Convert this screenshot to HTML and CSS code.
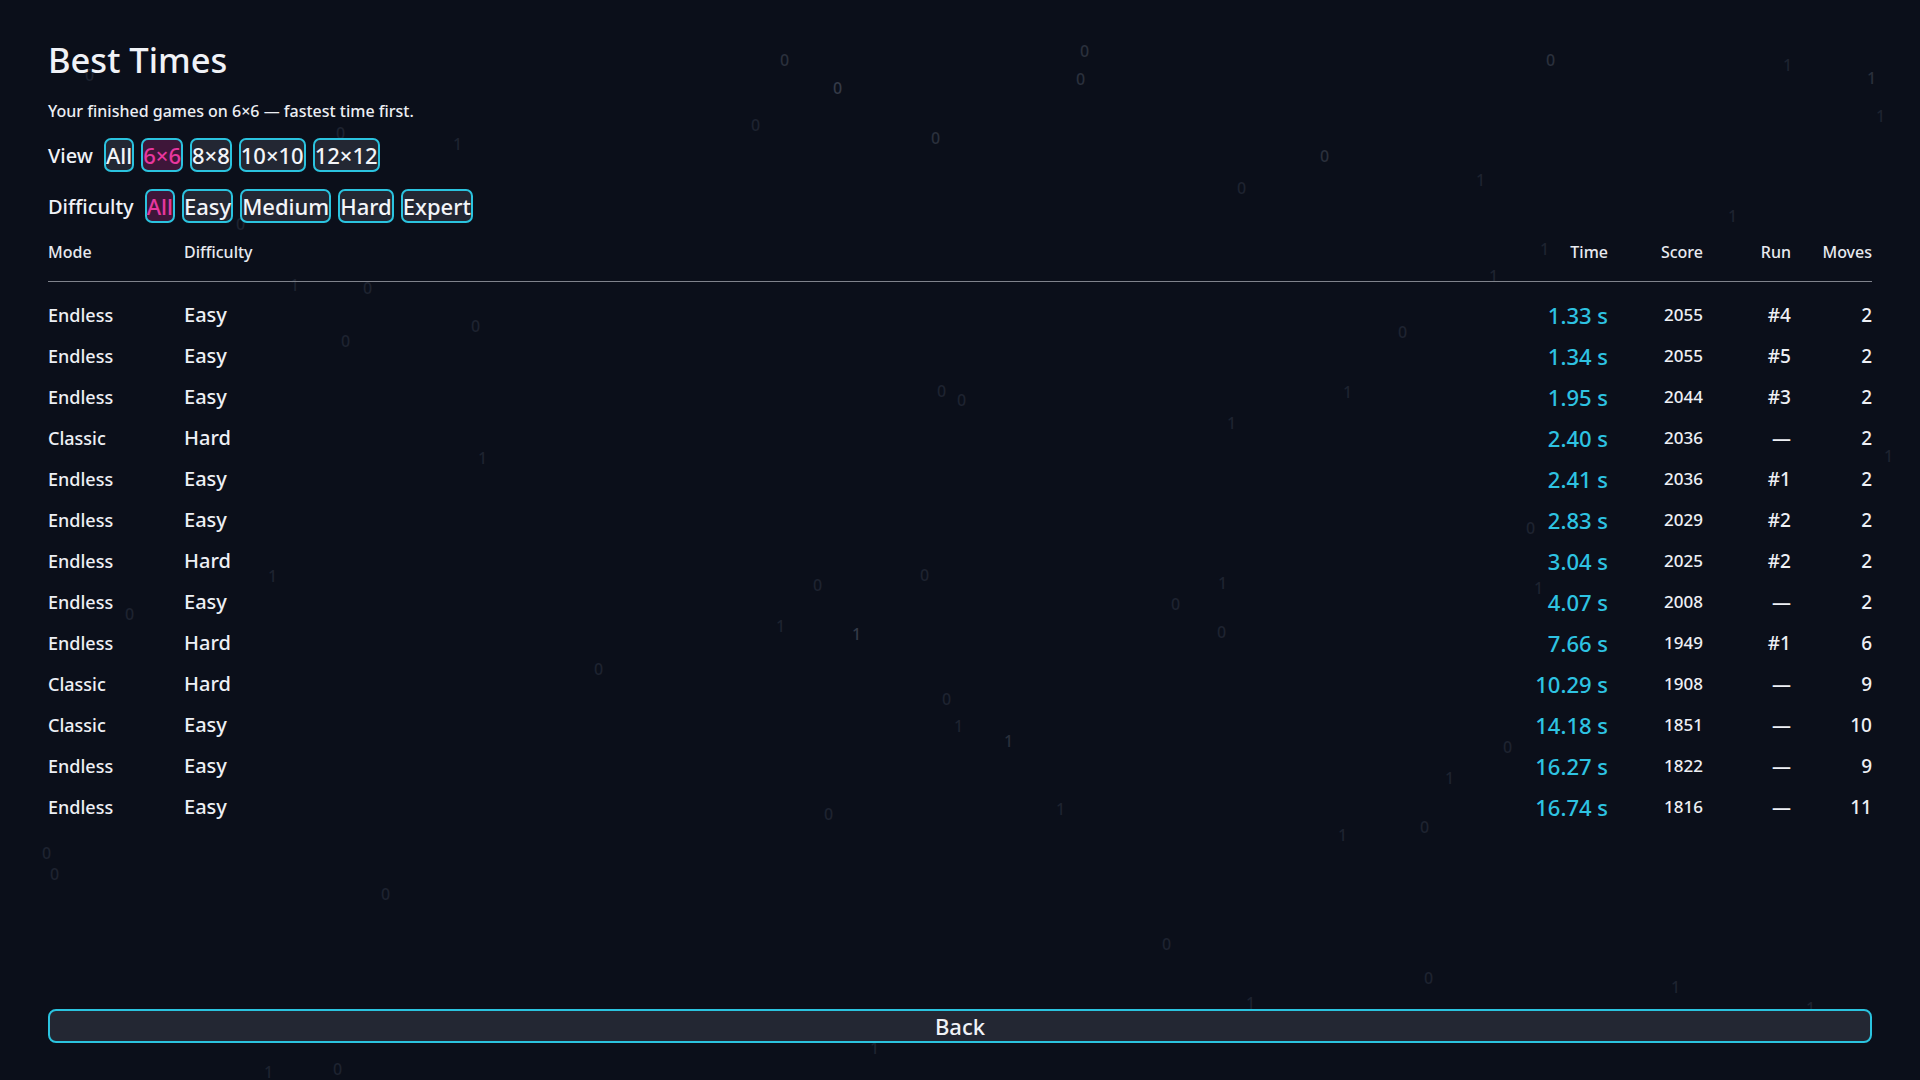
FILE: index.html
```html
<!DOCTYPE html>
<html lang="en">
<head>
<meta charset="utf-8">
<title>Best Times</title>
<link rel="stylesheet" href="styles.css">
</head>
<body>
<div class="rain" aria-hidden="true">
  <span class="d d2" style="left:780px;top:52px">0</span>
  <span class="d d3" style="left:833px;top:80px">0</span>
  <span class="d d2" style="left:1080px;top:43px">0</span>
  <span class="d d2" style="left:1076px;top:71px">0</span>
  <span class="d d2" style="left:1546px;top:52px">0</span>
  <span class="d d1" style="left:1783px;top:57px">1</span>
  <span class="d d2" style="left:1867px;top:70px">1</span>
  <span class="d d1" style="left:1876px;top:108px">1</span>
  <span class="d d1" style="left:751px;top:117px">0</span>
  <span class="d d2" style="left:931px;top:130px">0</span>
  <span class="d d2" style="left:1320px;top:148px">0</span>
  <span class="d d1" style="left:453px;top:136px">1</span>
  <span class="d d1" style="left:1237px;top:180px">0</span>
  <span class="d d1" style="left:1476px;top:172px">1</span>
  <span class="d d1" style="left:1728px;top:208px">1</span>
  <span class="d d1" style="left:85px;top:67px">0</span>
  <span class="d d1" style="left:336px;top:125px">0</span>
  <span class="d d1" style="left:236px;top:216px">0</span>
  <span class="d d1" style="left:1540px;top:241px">1</span>
  <span class="d d1" style="left:1489px;top:268px">1</span>
  <span class="d d1" style="left:290px;top:277px">1</span>
  <span class="d d1" style="left:363px;top:280px">0</span>
  <span class="d d1" style="left:471px;top:318px">0</span>
  <span class="d d1" style="left:341px;top:333px">0</span>
  <span class="d d1" style="left:1398px;top:324px">0</span>
  <span class="d d1" style="left:937px;top:383px">0</span>
  <span class="d d1" style="left:957px;top:392px">0</span>
  <span class="d d1" style="left:1343px;top:384px">1</span>
  <span class="d d1" style="left:1227px;top:415px">1</span>
  <span class="d d1" style="left:478px;top:450px">1</span>
  <span class="d d1" style="left:1884px;top:448px">1</span>
  <span class="d d1" style="left:1526px;top:520px">0</span>
  <span class="d d1" style="left:268px;top:568px">1</span>
  <span class="d d1" style="left:813px;top:577px">0</span>
  <span class="d d1" style="left:920px;top:567px">0</span>
  <span class="d d1" style="left:1218px;top:575px">1</span>
  <span class="d d1" style="left:1171px;top:596px">0</span>
  <span class="d d1" style="left:1534px;top:580px">1</span>
  <span class="d d1" style="left:125px;top:606px">0</span>
  <span class="d d1" style="left:776px;top:618px">1</span>
  <span class="d d3" style="left:852px;top:626px">1</span>
  <span class="d d1" style="left:1217px;top:624px">0</span>
  <span class="d d1" style="left:594px;top:661px">0</span>
  <span class="d d1" style="left:942px;top:691px">0</span>
  <span class="d d1" style="left:954px;top:718px">1</span>
  <span class="d d2" style="left:1004px;top:733px">1</span>
  <span class="d d1" style="left:1503px;top:739px">0</span>
  <span class="d d1" style="left:1445px;top:770px">1</span>
  <span class="d d1" style="left:824px;top:806px">0</span>
  <span class="d d1" style="left:1056px;top:801px">1</span>
  <span class="d d1" style="left:1338px;top:827px">1</span>
  <span class="d d1" style="left:1420px;top:819px">0</span>
  <span class="d d1" style="left:42px;top:845px">0</span>
  <span class="d d1" style="left:50px;top:866px">0</span>
  <span class="d d1" style="left:381px;top:886px">0</span>
  <span class="d d1" style="left:1162px;top:936px">0</span>
  <span class="d d1" style="left:1424px;top:970px">0</span>
  <span class="d d1" style="left:1671px;top:979px">1</span>
  <span class="d d1" style="left:1246px;top:995px">1</span>
  <span class="d d1" style="left:870px;top:1040px">1</span>
  <span class="d d1" style="left:264px;top:1064px">1</span>
  <span class="d d1" style="left:333px;top:1061px">0</span>
  <span class="d d1" style="left:1806px;top:1000px">1</span>
</div>

<main class="page">
  <h1 class="title">Best Times</h1>
  <p class="subtitle">Your finished games on 6×6 — fastest time first.</p>

  <div class="filter">
    <span class="filter-label">View</span>
    <button class="pill">All</button>
    <button class="pill active">6×6</button>
    <button class="pill">8×8</button>
    <button class="pill">10×10</button>
    <button class="pill">12×12</button>
  </div>
  <div class="filter">
    <span class="filter-label">Difficulty</span>
    <button class="pill active">All</button>
    <button class="pill">Easy</button>
    <button class="pill">Medium</button>
    <button class="pill">Hard</button>
    <button class="pill">Expert</button>
  </div>

  <div class="table">
    <div class="row head">
      <span>Mode</span><span>Difficulty</span><span class="r">Time</span><span class="r">Score</span><span class="r">Run</span><span class="r">Moves</span>
    </div>
    <div class="body">
      <div class="row"><span class="mode">Endless</span><span class="diff">Easy</span><span class="time">1.33 s</span><span class="score">2055</span><span class="run">#4</span><span class="moves">2</span></div>
      <div class="row"><span class="mode">Endless</span><span class="diff">Easy</span><span class="time">1.34 s</span><span class="score">2055</span><span class="run">#5</span><span class="moves">2</span></div>
      <div class="row"><span class="mode">Endless</span><span class="diff">Easy</span><span class="time">1.95 s</span><span class="score">2044</span><span class="run">#3</span><span class="moves">2</span></div>
      <div class="row"><span class="mode">Classic</span><span class="diff">Hard</span><span class="time">2.40 s</span><span class="score">2036</span><span class="run">—</span><span class="moves">2</span></div>
      <div class="row"><span class="mode">Endless</span><span class="diff">Easy</span><span class="time">2.41 s</span><span class="score">2036</span><span class="run">#1</span><span class="moves">2</span></div>
      <div class="row"><span class="mode">Endless</span><span class="diff">Easy</span><span class="time">2.83 s</span><span class="score">2029</span><span class="run">#2</span><span class="moves">2</span></div>
      <div class="row"><span class="mode">Endless</span><span class="diff">Hard</span><span class="time">3.04 s</span><span class="score">2025</span><span class="run">#2</span><span class="moves">2</span></div>
      <div class="row"><span class="mode">Endless</span><span class="diff">Easy</span><span class="time">4.07 s</span><span class="score">2008</span><span class="run">—</span><span class="moves">2</span></div>
      <div class="row"><span class="mode">Endless</span><span class="diff">Hard</span><span class="time">7.66 s</span><span class="score">1949</span><span class="run">#1</span><span class="moves">6</span></div>
      <div class="row"><span class="mode">Classic</span><span class="diff">Hard</span><span class="time">10.29 s</span><span class="score">1908</span><span class="run">—</span><span class="moves">9</span></div>
      <div class="row"><span class="mode">Classic</span><span class="diff">Easy</span><span class="time">14.18 s</span><span class="score">1851</span><span class="run">—</span><span class="moves">10</span></div>
      <div class="row"><span class="mode">Endless</span><span class="diff">Easy</span><span class="time">16.27 s</span><span class="score">1822</span><span class="run">—</span><span class="moves">9</span></div>
      <div class="row"><span class="mode">Endless</span><span class="diff">Easy</span><span class="time">16.74 s</span><span class="score">1816</span><span class="run">—</span><span class="moves">11</span></div>
    </div>
  </div>

  <div class="spacer"></div>
  <button class="back">Back</button>
</main>
</body>
</html>
```

FILE: styles.css
```css
* { box-sizing: border-box; }

html, body {
  margin: 0;
  padding: 0;
  height: 100%;
}

body {
  background: #0b0f1a;
  color: #eef0f5;
  font-family: "Noto Sans", "Open Sans", sans-serif;
  font-weight: 500;
  overflow: hidden;
  position: relative;
}

.rain {
  position: absolute;
  inset: 0;
  pointer-events: none;
  z-index: 0;
}

.d {
  position: absolute;
  font-size: 16px;
  line-height: 1;
  font-weight: 500;
}
.d1 { color: #1e2330; }
.d2 { color: #2a303c; }
.d3 { color: #343a47; }

.page {
  position: relative;
  z-index: 1;
  height: 100vh;
  display: flex;
  flex-direction: column;
  padding: 36px 48px 37px;
}

.title {
  margin: 0;
  font-size: 34.5px;
  font-weight: 500;
  line-height: 47px;
  color: #f0f2f7;
}

.subtitle {
  margin: 17px 0 0;
  font-size: 16px;
  line-height: 22px;
  color: #eceef3;
}

.filter {
  display: flex;
  align-items: center;
  gap: 7px;
  margin-top: 16px;
  height: 34px;
}
.filter + .filter { margin-top: 17px; }

.filter-label {
  font-size: 20px;
  margin-right: 4px;
  color: #f0f2f7;
}

.pill {
  font-family: inherit;
  font-size: 22px;
  font-weight: 500;
  line-height: 30px;
  height: 34px;
  padding: 0;
  margin: 0;
  border: 2px solid #2bc3df;
  border-radius: 7px;
  background: #232733;
  color: #f3f5f9;
  cursor: pointer;
}
.pill.active {
  background: #3e1639;
  color: #e7379f;
}

.table {
  margin-top: 18px;
}

.row {
  display: grid;
  grid-template-columns: 136px 1fr 110px 95px 88px 81px;
  align-items: center;
}

.row > span { white-space: nowrap; }

.head {
  font-size: 16px;
  line-height: 22px;
  padding-bottom: 18px;
  border-bottom: 1px solid #80838c;
  color: #e8eaf0;
}

.r { text-align: right; }

.body { padding-top: 12px; }

.body .row { height: 41px; }

.mode { font-size: 18px; }
.diff { font-size: 20px; }
.time { font-size: 22px; color: #2ec3e2; text-align: right; }
.score { font-size: 17px; text-align: right; }
.run { font-size: 19px; text-align: right; }
.moves { font-size: 19px; text-align: right; }

.spacer { flex: 1; }

.back {
  font-family: inherit;
  font-size: 22px;
  font-weight: 500;
  line-height: 30px;
  height: 34px;
  padding: 0;
  width: 100%;
  border: 2px solid #2bc3df;
  border-radius: 8px;
  background: #232733;
  color: #f0f2f7;
  cursor: pointer;
}
```
